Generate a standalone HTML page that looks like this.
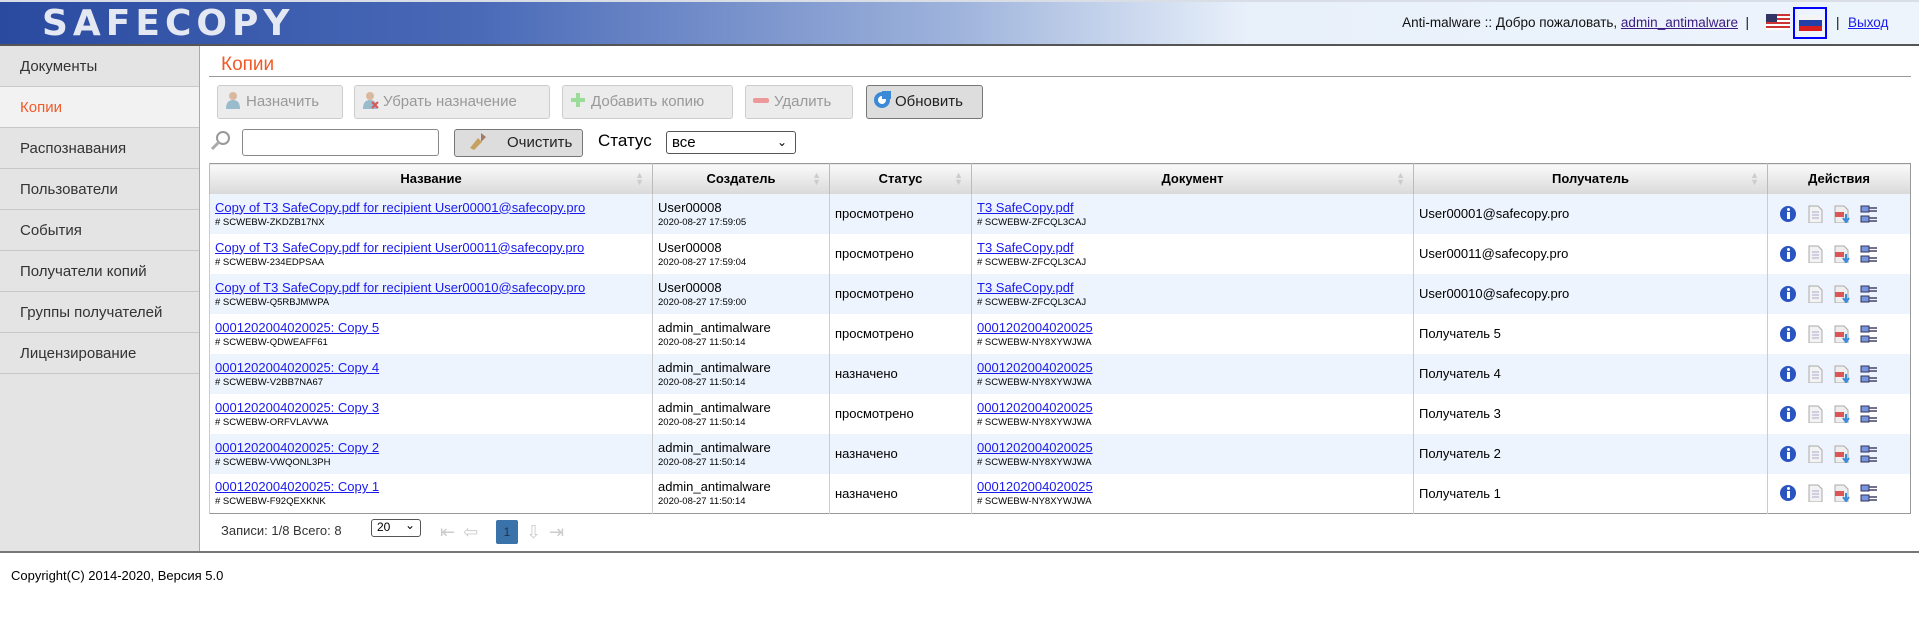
<!DOCTYPE html>
<html><head><meta charset="utf-8"><style>
*{box-sizing:border-box;margin:0;padding:0}
body{width:1919px;height:621px;overflow:hidden;background:#fff;font-family:"Liberation Sans","DejaVu Sans",sans-serif;font-size:13px;color:#000;position:relative}
.hdr{position:absolute;left:0;top:0;width:1919px;height:46px;background:linear-gradient(90deg,#2a4aa0 0%,#4a6ab8 25%,#9fb4dc 50%,#e8f0fa 65%,#edf4fc 100%);border-bottom:2px solid #555;border-top:2px solid #d8dde6}
.logo{position:absolute;left:42px;top:1px;font:bold 36px "DejaVu Sans",sans-serif;letter-spacing:5px;color:#e4e8f2}
.ht{position:absolute;top:15px;font-size:13.5px;color:#111;white-space:nowrap}
.ht a{color:#3a1a80}
.side{position:absolute;left:0;top:46px;width:200px;height:506px;background:#e4e4e4;border-right:1px solid #aaa}
.side div{height:41px;line-height:41px;padding-left:20px;font-size:15px;color:#333;border-bottom:1px solid #c8c8c8}
.side .act{background:#f2f2f2;color:#f05a28}
.title{position:absolute;left:221px;top:54px;font-size:19px;color:#f05a28}
.tline{position:absolute;left:209px;top:76px;width:1702px;height:1px;background:#999}
.btn{position:absolute;top:85px;height:34px;border:1px solid #ccc;border-radius:3px;background:#ececec;color:#999;font-size:15px;line-height:32px;padding-left:6px}
.btn.on{background:#ddd;border-color:#777;color:#222}
.ic{display:inline-block;width:18px;height:18px;vertical-align:-3px;margin-right:4px}
input{position:absolute;left:242px;top:129px;width:197px;height:27px;border:1px solid #888;border-radius:3px}
.clr{position:absolute;left:454px;top:129px;width:129px;height:28px;border:1px solid #777;border-radius:3px;background:#ddd;font-size:15px;line-height:26px;color:#222}
.stl{position:absolute;left:598px;top:131px;font-size:17px}
.sel{position:absolute;left:666px;top:131px;width:130px;height:23px;border:1px solid #555;border-radius:3px;font-size:15px;padding-left:5px;line-height:21px}
table{position:absolute;left:209px;top:163px;width:1702px;border-collapse:collapse;border:1px solid #999}
th{height:30px;background:linear-gradient(#fafafa,#d9d9d9);font-size:13px;font-weight:bold;border-left:1px solid #bbb;position:relative}
th .s{position:absolute;right:8px;top:8px;color:#ccc;font-size:9px;line-height:7px}
td{height:40px;border-left:1px solid #ccc;padding-left:5px;vertical-align:middle;font-size:13px;white-space:nowrap}
tr:nth-child(even) td{background:#edf4fd}
td a{color:#1a1aee}
td small{display:block;font-size:9.5px;margin-top:2px}
.ai{display:inline-block;width:18px;height:18px;margin-right:9px;vertical-align:middle}
.pg{position:absolute;top:523px;font-size:13px;color:#333}
.foot{position:absolute;left:0;top:551px;width:1919px;height:2px;background:#777}
.copy{position:absolute;left:11px;top:568px;font-size:13px}
</style></head><body>
<div class="hdr"><div class="logo">SAFECOPY</div></div>
<div class="ht" style="right:170px">Anti-malware :: Добро пожаловать, <a href="#">admin_antimalware</a> &nbsp;|</div>
<svg style="position:absolute;left:1766px;top:14px" width="24" height="16"><rect width="24" height="16" fill="#c33"/><rect y="2" width="24" height="2" fill="#fff"/><rect y="6" width="24" height="2" fill="#fff"/><rect y="10" width="24" height="2" fill="#fff"/><rect y="14" width="24" height="2" fill="#fff"/><rect width="11" height="8" fill="#336"/></svg>
<div style="position:absolute;left:1793px;top:7px;width:34px;height:32px;border:2px solid #00f"></div>
<svg style="position:absolute;left:1799px;top:15px" width="23" height="16"><rect width="23" height="5" fill="#f4f4f4"/><rect y="5" width="23" height="6" fill="#2340a8"/><rect y="11" width="23" height="5" fill="#d81e1e"/></svg>
<div class="ht" style="left:1836px">|</div>
<div class="ht" style="left:1848px"><a href="#" style="color:#1a1aee">Выход</a></div>
<div class="side"><div>Документы</div><div class="act">Копии</div><div>Распознавания</div><div>Пользователи</div><div>События</div><div>Получатели копий</div><div>Группы получателей</div><div>Лицензирование</div></div>
<div class="title">Копии</div><div class="tline"></div>
<div class="btn" style="left:217px;width:126px"><svg class="ic"><circle cx="9" cy="5" r="4" fill="#d9b8a0"/><path d="M2 18q0-9 7-9t7 9z" fill="#9bc"/></svg>Назначить</div>
<div class="btn" style="left:354px;width:196px"><svg class="ic"><circle cx="9" cy="5" r="4" fill="#d9b8a0"/><path d="M2 18q0-9 7-9t7 9z" fill="#9bc"/><path d="M11 11l6 6M17 11l-6 6" stroke="#d55" stroke-width="2"/></svg>Убрать назначение</div>
<div class="btn" style="left:562px;width:171px"><svg class="ic"><path d="M7 2h4v5h5v4h-5v5H7v-5H2V7h5z" fill="#9d9"/></svg>Добавить копию</div>
<div class="btn" style="left:745px;width:108px"><svg class="ic"><rect x="1" y="7" width="16" height="5" rx="2" fill="#e99"/></svg>Удалить</div>
<div class="btn on" style="left:866px;width:117px"><svg class="ic"><circle cx="9" cy="9" r="8" fill="#3a8ad8"/><circle cx="9" cy="9" r="4" fill="#fff"/><rect x="9" y="0" width="9" height="8" fill="#3a8ad8"/></svg>Обновить</div>
<svg style="position:absolute;left:210px;top:130px" width="22" height="22"><circle cx="13" cy="8" r="6" fill="none" stroke="#999" stroke-width="2"/><path d="M9 12l-7 7" stroke="#aaa" stroke-width="3"/></svg>
<input>
<div class="clr"><svg class="ic" style="margin:0 20px 0 14px"><path d="M12 1l5 4-5 5z" fill="#a76"/><path d="M1 16l8-10 4 4-8 8z" fill="#c8a060"/></svg>Очистить</div>
<div class="stl">Статус</div>
<div class="sel">все<span style="position:absolute;right:8px;top:0;font-size:12px">&#8964;</span></div>
<table>
<tr><th style="width:443px">Название<span class="s">▲<br>▼</span></th><th style="width:177px">Создатель<span class="s">▲<br>▼</span></th><th style="width:142px">Статус<span class="s">▲<br>▼</span></th><th style="width:442px">Документ<span class="s">▲<br>▼</span></th><th style="width:354px">Получатель<span class="s">▲<br>▼</span></th><th>Действия</th></tr>
<tr><td><a href="#">Copy of T3 SafeCopy.pdf for recipient User00001@safecopy.pro</a><small># SCWEBW-ZKDZB17NX</small></td><td>User00008<small>2020-08-27 17:59:05</small></td><td>просмотрено</td><td><a href="#">T3 SafeCopy.pdf</a><small># SCWEBW-ZFCQL3CAJ</small></td><td>User00001@safecopy.pro</td><td class="acts"></td></tr>
<tr><td><a href="#">Copy of T3 SafeCopy.pdf for recipient User00011@safecopy.pro</a><small># SCWEBW-234EDPSAA</small></td><td>User00008<small>2020-08-27 17:59:04</small></td><td>просмотрено</td><td><a href="#">T3 SafeCopy.pdf</a><small># SCWEBW-ZFCQL3CAJ</small></td><td>User00011@safecopy.pro</td><td class="acts"></td></tr>
<tr><td><a href="#">Copy of T3 SafeCopy.pdf for recipient User00010@safecopy.pro</a><small># SCWEBW-Q5RBJMWPA</small></td><td>User00008<small>2020-08-27 17:59:00</small></td><td>просмотрено</td><td><a href="#">T3 SafeCopy.pdf</a><small># SCWEBW-ZFCQL3CAJ</small></td><td>User00010@safecopy.pro</td><td class="acts"></td></tr>
<tr><td><a href="#">0001202004020025: Copy 5</a><small># SCWEBW-QDWEAFF61</small></td><td>admin_antimalware<small>2020-08-27 11:50:14</small></td><td>просмотрено</td><td><a href="#">0001202004020025</a><small># SCWEBW-NY8XYWJWA</small></td><td>Получатель 5</td><td class="acts"></td></tr>
<tr><td><a href="#">0001202004020025: Copy 4</a><small># SCWEBW-V2BB7NA67</small></td><td>admin_antimalware<small>2020-08-27 11:50:14</small></td><td>назначено</td><td><a href="#">0001202004020025</a><small># SCWEBW-NY8XYWJWA</small></td><td>Получатель 4</td><td class="acts"></td></tr>
<tr><td><a href="#">0001202004020025: Copy 3</a><small># SCWEBW-ORFVLAVWA</small></td><td>admin_antimalware<small>2020-08-27 11:50:14</small></td><td>просмотрено</td><td><a href="#">0001202004020025</a><small># SCWEBW-NY8XYWJWA</small></td><td>Получатель 3</td><td class="acts"></td></tr>
<tr><td><a href="#">0001202004020025: Copy 2</a><small># SCWEBW-VWQONL3PH</small></td><td>admin_antimalware<small>2020-08-27 11:50:14</small></td><td>назначено</td><td><a href="#">0001202004020025</a><small># SCWEBW-NY8XYWJWA</small></td><td>Получатель 2</td><td class="acts"></td></tr>
<tr><td><a href="#">0001202004020025: Copy 1</a><small># SCWEBW-F92QEXKNK</small></td><td>admin_antimalware<small>2020-08-27 11:50:14</small></td><td>назначено</td><td><a href="#">0001202004020025</a><small># SCWEBW-NY8XYWJWA</small></td><td>Получатель 1</td><td class="acts"></td></tr>
</table>
<div class="pg" style="left:221px">Записи: 1/8 Всего: 8</div>
<div style="position:absolute;left:371px;top:519px;width:50px;height:18px;border:1px solid #555;border-radius:3px;font-size:12px;padding-left:5px">20 <span style="position:absolute;right:5px;top:-2px">&#8964;</span></div>
<div style="position:absolute;left:440px;top:522px;font-size:18px;color:#ccc;letter-spacing:8px">⇤⇦</div>
<div style="position:absolute;left:496px;top:520px;width:22px;height:24px;background:#3a72aa;border-radius:2px;color:#234;text-align:center;line-height:24px;font-size:12px">1</div>
<div style="position:absolute;left:526px;top:522px;font-size:18px;color:#ccc;letter-spacing:8px">⇩⇥</div>
<div class="foot"></div>
<div class="copy">Copyright(C) 2014-2020, Версия 5.0</div>
<script>
var ic='<svg class="ai"><circle cx="9" cy="9" r="8" fill="#2a55c0"/><rect x="8" y="7" width="3" height="7" fill="#fff"/><circle cx="9.5" cy="4.5" r="1.5" fill="#fff"/></svg><svg class="ai"><path d="M3 1h9l4 4v13H3z" fill="#f2f2f2" stroke="#aaa"/><path d="M6 7h7M6 10h7M6 13h7" stroke="#aac"/></svg><svg class="ai"><path d="M2 1h9l4 4v13H2z" fill="#eee" stroke="#aaa"/><rect x="2" y="7" width="9" height="5" fill="#d55"/><path d="M13 9v6M10 13l3 4 3-4" stroke="#3a8ad8" stroke-width="2" fill="none"/></svg><svg class="ai"><rect x="1" y="1" width="8" height="6" fill="#7896e0" stroke="#335"/><rect x="1" y="11" width="8" height="6" fill="#7896e0" stroke="#335"/><path d="M9 3h8M9 6h8M9 13h8M9 16h8" stroke="#446" stroke-width="1.5"/></svg>';
document.querySelectorAll('.acts').forEach(function(e){e.style.paddingLeft='11px';e.innerHTML=ic;});
</script>
</body></html>
